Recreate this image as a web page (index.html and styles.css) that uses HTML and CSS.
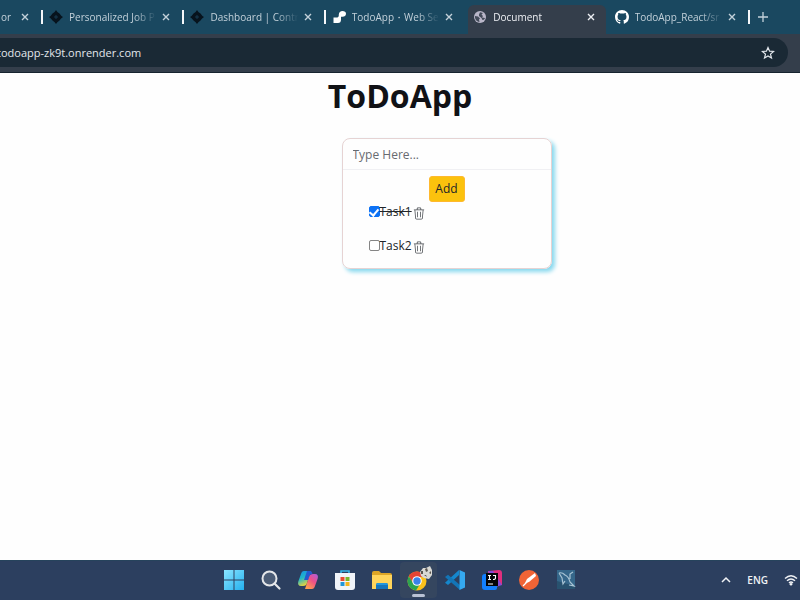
FILE: index.html
```html
<!DOCTYPE html>
<html lang="en">
<head>
<meta charset="utf-8">
<title>Document</title>
<link rel="stylesheet" href="styles.css">
</head>
<body>
<svg class="defs" aria-hidden="true">
  <symbol id="close" viewBox="0 0 8 8"><path d="M1 1l6 6M7 1L1 7" stroke="currentColor" stroke-width="1.4" fill="none"/></symbol>
  <symbol id="spark" viewBox="0 0 14 14"><path d="M7 0Q8 2 10.500 3.500Q12 6 14 7Q12 8 10.500 10.500Q8 12 7 14Q6 12 3.500 10.500Q2 8 0 7Q2 6 3.500 3.500Q6 2 7 0z" fill="#07131d"/><path d="M7 5v4M5 7h4" stroke="#1b435b" stroke-width=".8"/></symbol>
  <symbol id="trash" viewBox="0 0 16 16"><path fill="currentColor" d="M6.500 1h3a.5.5 0 0 1 .5.5v1H6v-1a.5.5 0 0 1 .5-.5M11 2.500v-1A1.500 1.500 0 0 0 9.500 0h-3A1.500 1.500 0 0 0 5 1.500v1H1.500a.5.5 0 0 0 0 1h.54l.85 10.660A2 2 0 0 0 4.885 16h6.230a2 2 0 0 0 1.994-1.840l.853-10.660h.538a.5.5 0 0 0 0-1zm1.958 1-.846 10.580a1 1 0 0 1-.997.920h-6.230a1 1 0 0 1-.997-.920L3.042 3.500zM5.500 5.500h1V13h-1zM9.500 5.500h1V13h-1z"/></symbol>
</svg>
<header class="browser">
  <nav class="tabs" aria-label="Tabs">
    <div class="tab tab-cut"><span class="tab-title">or</span><button class="close" aria-label="Close tab"><svg><use href="#close"/></svg></button></div>
    <div class="tab divided"><svg class="favicon"><use href="#spark"/></svg><span class="tab-title">Personalized Job P</span><button class="close" aria-label="Close tab"><svg><use href="#close"/></svg></button></div>
    <div class="tab divided"><svg class="favicon"><use href="#spark"/></svg><span class="tab-title">Dashboard | Contr</span><button class="close" aria-label="Close tab"><svg><use href="#close"/></svg></button></div>
    <div class="tab divided"><svg class="favicon" viewBox="0 0 14 14"><path fill="#fff" d="M10.500 1C12.500 1 14 2 14 3.800S12.500 6.800 10.500 6.800H9V9.500Q9 13 6 13H1.500V7.600H4.500C6 7.600 6.600 7 6.800 5.500V4.500C7 2.500 8.300 1 10.500 1z"/></svg><span class="tab-title">TodoApp・Web Se</span><button class="close" aria-label="Close tab"><svg><use href="#close"/></svg></button></div>
    <div class="tab active"><svg class="favicon" viewBox="0 0 14 14"><circle cx="7" cy="7" r="6" fill="#b9b6c8"/><path fill="#434b59" d="M2 6L5 6.500L7 8.500L6 9.500L6.500 12C3.500 11.500 1.600 9 2 6zM7 2.200L10 3L8.500 4.500L10 6L9 7.500L12 8C11.500 9.500 10.500 10 9.500 10L8.500 8L6 6L6 4.500z"/></svg><span class="tab-title">Document</span><button class="close" aria-label="Close tab"><svg><use href="#close"/></svg></button></div>
    <div class="tab"><svg class="favicon" viewBox="0 0 16 16"><path fill="#fff" d="M8 0C3.580 0 0 3.580 0 8c0 3.540 2.290 6.530 5.470 7.590.4.070.55-.17.55-.38v-1.490c-2.010.37-2.530-.49-2.690-.94-.09-.23-.48-.94-.82-1.130-.28-.15-.68-.52-.01-.53.63-.01 1.080.58 1.230.82.72 1.210 1.870.87 2.330.66.07-.52.28-.87.51-1.070-1.780-.2-3.640-.89-3.640-3.950 0-.87.31-1.590.82-2.150-.08-.2-.36-1.020.08-2.120 0 0 .67-.21 2.200.82a7.600 7.600 0 0 1 4 0c1.530-1.040 2.200-.82 2.200-.82.44 1.100.16 1.920.08 2.120.51.56.82 1.270.82 2.150 0 3.070-1.870 3.750-3.650 3.950.29.25.54.73.54 1.480v2.200c0 .21.15.46.55.38A8 8 0 0 0 16 8c0-4.420-3.580-8-8-8z"/></svg><span class="tab-title">TodoApp_React/sr</span><button class="close" aria-label="Close tab"><svg><use href="#close"/></svg></button></div>
    <div class="new-tab divided"><button class="close" aria-label="New tab"><svg viewBox="0 0 10 10"><path d="M5 0v10M0 5h10" stroke="currentColor" stroke-width="1.300"/></svg></button></div>
  </nav>
  <div class="toolbar">
    <div class="address">
      <span>todoapp-zk9t.onrender.com</span>
      <button class="star" aria-label="Bookmark"><svg viewBox="0 0 14 14"><path d="M7 1.500L8.600 5.200L12.600 5.500L9.500 8.100L10.500 12L7 9.900L3.500 12L4.500 8.100L1.400 5.500L5.400 5.200z" fill="none" stroke="currentColor" stroke-width="1.200"/></svg></button>
    </div>
  </div>
</header>
<main class="page">
  <h1>ToDoApp</h1>
  <form class="card">
    <input class="entry" type="text" placeholder="Type Here..." aria-label="New task">
    <button class="add" type="button">Add</button>
    <ul class="tasks">
      <li><input type="checkbox" id="t1" checked><label for="t1">Task1</label><button type="button" class="delete" aria-label="Delete Task1"><svg><use href="#trash"/></svg></button></li>
      <li><input type="checkbox" id="t2"><label for="t2">Task2</label><button type="button" class="delete" aria-label="Delete Task2"><svg><use href="#trash"/></svg></button></li>
    </ul>
  </form>
</main>
<footer class="taskbar">
  <nav class="apps" aria-label="Taskbar">
    <button aria-label="Start"><svg viewBox="0 0 22 22"><defs><linearGradient id="win" x2="1" y2="1"><stop stop-color="#8be5ff"/><stop offset="1" stop-color="#23b0ef"/></linearGradient></defs><path fill="url(#win)" d="M1 1h9.500v9.500H1zM11.500 1H21v9.500h-9.500zM1 11.500h9.500V21H1zM11.500 11.500H21V21h-9.500z"/></svg></button>
    <button aria-label="Search"><svg viewBox="0 0 22 22"><circle cx="9.500" cy="9.500" r="7" fill="#4b5c76" stroke="#e4e6e9" stroke-width="2"/><path d="M14.500 14.500l5 5" stroke="#e4e6e9" stroke-width="2.200" stroke-linecap="round"/></svg></button>
    <button aria-label="Copilot"><svg viewBox="0 0 22 22"><defs><linearGradient id="cpa" x2=".4" y2="1"><stop stop-color="#188ce8"/><stop offset=".5" stop-color="#20b7c7"/><stop offset="1" stop-color="#e8d43c"/></linearGradient><linearGradient id="cpb" x1="1" x2=".3" y2="1"><stop stop-color="#a85ee0"/><stop offset=".5" stop-color="#ee5087"/><stop offset="1" stop-color="#ff9e4e"/></linearGradient></defs><path fill="url(#cpa)" d="M7 2h7l-4 12c-.5 2-1.500 3-4 3H4c-2.500 0-3.500-2-2.700-4.500L4 5c.6-2 1.500-3 3-3z"/><path fill="url(#cpb)" d="M15 20H8l4-12c.5-2 1.500-3 4-3h2c2.500 0 3.500 2 2.700 4.500L18 17c-.6 2-1.500 3-3 3z"/><path fill="#2459cf" d="M10 2h3c1.500 0 2 1 2.500 3-2 0-3 1-3.500 3l-1 3H7z"/></svg></button>
    <button aria-label="Store"><svg viewBox="0 0 22 22"><path d="M7 5V2h8v3" fill="none" stroke="#36b6e9" stroke-width="1.600"/><path d="M1 4h20v14a3 3 0 0 1-3 3H4a3 3 0 0 1-3-3z" fill="#f1f4f8"/><path fill="#e84b30" d="M6.500 8h4v4h-4z"/><path fill="#79b72a" d="M11.500 8h4v4h-4z"/><path fill="#2096d8" d="M6.500 13h4v4h-4z"/><path fill="#f4b51e" d="M11.500 13h4v4h-4z"/></svg></button>
    <button aria-label="Files"><svg viewBox="0 0 22 22"><path fill="#dda526" d="M1 4q0-2 2-2h5l2 2h9q2 0 2 2v6H1z"/><path fill="#ffd45b" d="M1 6h20v14H1z"/><path fill="#1675bc" d="M5 20v-4q0-2 2-2h8q2 0 2 2v4z"/><path fill="#2496dc" d="M5 16q0-2 2-2h8q2 0 2 2z"/></svg></button>
    <button class="running" aria-label="Chrome"><svg viewBox="0 0 22 22"><circle cx="10" cy="12" r="9.500" fill="#fbc11b"/><path fill="#e64434" d="M1.800 7.200A9.500 9.500 0 0 1 18.500 8H10L6 14z"/><path fill="#2ca450" d="M1.800 7.200A9.500 9.500 0 0 0 9 21.500l4-6.500L6 14z"/><circle cx="10" cy="12" r="4.800" fill="#fff"/><circle cx="10" cy="12" r="3.700" fill="#3a82e9"/></svg><svg class="avatar" viewBox="0 0 14 14"><path fill="#d8d8d3" d="M1 6l3-4 3 0 4-2 2 4 0 5-3 4-5-1-3-2z"/><path fill="#59544e" d="M2 5l2 0 0 3-2 0zM6 3l2-1 1 3-2 1zM10 7l2-2 0 3zM5 9l2 0 1 2z"/></svg></button>
    <button aria-label="Code"><svg viewBox="0 0 22 22"><path fill="#1587cd" d="M15 1v5L4 16l-3-2.300L15 1z"/><path fill="#1375b7" d="M1 8l3-2.300L16 16v5L1 8z"/><path fill="#35a9f0" d="M15.500 1L21 3.500v15L15.500 21z"/></svg></button>
    <button aria-label="IntelliJ"><svg viewBox="0 0 22 22"><path fill="#e02f7e" d="M7 2l11-1q3 0 3 3v12L7 15z"/><path fill="#884bd8" d="M7 2l5 0 9 14-6 2z"/><path fill="#127fff" d="M1 8q0-3 3-3h12v14q0 2-2 2H4q-3 0-3-3z"/><path fill="#050609" d="M5 4h12v13H5z"/><path d="M7 6.500h3M8.500 6.500v4M7 10.500h3M12 6.500h2.500v2.500q0 1.500-2.500 1.500M7 15h5" stroke="#fff" stroke-width="1.100" fill="none"/></svg></button>
    <button aria-label="Postman"><svg viewBox="0 0 22 22"><circle cx="11" cy="11" r="10" fill="#f06436"/><path fill="#fff" d="M17 4l1 3-7 6-4 1 2-4z"/><path d="M5 17l5-5" stroke="#fff" stroke-width="1.300"/></svg></button>
    <button aria-label="Workbench"><svg viewBox="0 0 22 22"><path fill="#35678a" d="M2 1h18v19H2z"/><path fill="#28526f" d="M2 12l18 5v3H2z"/><path d="M4 4Q7 3 10 6q4 2 5 7l4 4-5-1M4 4l3 5 1 6 2-3M15 10V5l3-2" fill="none" stroke="#a8c4d4" stroke-width="1.200"/></svg></button>
  </nav>
  <div class="tray">
    <svg class="chevron" viewBox="0 0 10 10"><path d="M1 7l4-4 4 4" fill="none" stroke="currentColor" stroke-width="1.500"/></svg>
    <span>ENG</span>
    <svg class="wifi" viewBox="0 0 14 12"><path d="M1 4.500Q7-1 13 4.500M3 6.800Q7 3 11 6.800M5 9Q7 7 9 9" fill="none" stroke="currentColor" stroke-width="1.400"/><circle cx="7" cy="10.300" r="1.300" fill="currentColor"/></svg>
  </div>
</footer>
</body>
</html>
```
FILE: styles.css
```css
* { box-sizing: border-box; }
body {
  margin: 0;
  min-height: 100vh;
  display: flex;
  flex-direction: column;
  overflow: hidden;
  background: #fefefe;
  color: #212529;
  font: 12px/20px "Open Sans", "Noto Sans", sans-serif;
}
button { border: 0; padding: 0; background: none; color: inherit; font: inherit; }
svg { display: block; flex: none; }
.defs { position: absolute; width: 0; height: 0; }

.tabs {
  display: flex;
  height: 34px;
  background: #1a4860;
  color: #c3d1da;
  font-size: 10px;
  font-weight: 500;
}
.tab {
  position: relative;
  flex: 1 1 0;
  min-width: 0;
  display: flex;
  align-items: center;
  padding: 0 12px 0 8px;
}
.tab-cut { flex: 0 0 40px; padding-left: 0; }
.divided { position: relative; }
.divided::before {
  content: "";
  position: absolute;
  left: 0;
  top: 10px;
  width: 2px;
  height: 14px;
  background: #f5f7fa;
}
.favicon { width: 14px; height: 14px; margin-right: 6px; }
.tab-title {
  flex: 1;
  min-width: 0;
  white-space: nowrap;
  -webkit-mask-image: linear-gradient(90deg, #000 70%, transparent 94%);
  mask-image: linear-gradient(90deg, #000 70%, transparent 94%);
}
.tab.active::before {
  content: "";
  position: absolute;
  inset: 5px 1px 0 3px;
  border-radius: 6px 6px 0 0;
  background: #343e4b;
}
.active > * { position: relative; }
.active { color: #eef0f4; }
.close svg { width: 8px; height: 8px; }
.new-tab { flex: 0 0 52px; display: flex; align-items: center; padding-left: 10px; }
.new-tab svg { width: 10px; height: 10px; }
.tabs { padding-left: 1px; }

.toolbar {
  padding: 4px 12px 5px 0;
  background: #343e4b;
  border-bottom: 1px solid #17242f;
}
.address {
  display: flex;
  justify-content: space-between;
  align-items: center;
  height: 29px;
  margin-left: -3px;
  padding-right: 13px;
  border-radius: 0 15px 15px 0;
  background: #1a2935;
  color: #e2e7ec;
  font-size: 11px;
  font-weight: 500;
}
.star svg { width: 14px; height: 14px; }

.page { flex: 1; display: flex; flex-direction: column; align-items: center; }
h1 { margin: 0; font-size: 32px; line-height: 46px; font-weight: 700; color: #111216; }
.card {
  width: 210px;
  margin: 19px 0 0 93px;
  padding-bottom: 12px;
  border: 1px solid #e6d3d3;
  border-radius: 8px;
  box-shadow: 3px 3px 4px #87d8ee;
  display: flex;
  flex-direction: column;
  align-items: center;
}
.entry {
  width: 100%;
  height: 31px;
  padding: 0 10px;
  border: 0;
  border-bottom: 1px solid #f0f0f3;
  border-radius: 8px 8px 0 0;
  background: none;
  color: inherit;
  font: inherit;
}
.entry::placeholder { color: #686b70; opacity: 1; }
.add {
  width: 36px;
  height: 26px;
  margin-top: 6px;
  border: 1px solid #ffb92e;
  border-radius: 3px;
  background: #fbc20d;
  line-height: 24px;
}
.tasks {
  align-self: stretch;
  display: grid;
  gap: 14px;
  margin: 0;
  padding: 0 26px;
  list-style: none;
}
.tasks li { display: flex; align-items: center; height: 20px; }
.tasks input {
  appearance: none;
  width: 11px;
  height: 11px;
  margin: 0 0 2px;
  border: 1px solid #858585;
  border-radius: 2px;
  background: #fff;
}
.tasks input:checked { border-color: #0d72f5; background: #0d72f5; }
.tasks input:checked::before {
  content: "";
  display: block;
  width: 4px;
  height: 7px;
  margin: 0 auto;
  border: solid #fff;
  border-width: 0 2px 2px 0;
  transform: rotate(40deg);
}
.tasks input:checked + label { text-decoration: line-through; }
.delete { margin: 2px 0 0 1px; color: #45494e; }
.delete svg { width: 12px; height: 13px; }

.taskbar {
  display: grid;
  grid-template-columns: 1fr 46% 1fr;
  height: 40px;
  border-top: 1px solid #26435c;
  background: #2c3f5f;
  color: #f1f3f6;
}
.apps { grid-column: 2; display: flex; align-items: center; padding-bottom: 1px; }
.apps button { position: relative; flex: 1; height: 36px; display: grid; place-items: center; }
.apps svg { width: 22px; height: 22px; }
.apps .running { background: #35465f; border-radius: 4px; }
.running::after {
  content: "";
  position: absolute;
  left: 12px;
  bottom: 1px;
  width: 13px;
  height: 3px;
  border-radius: 2px;
  background: #b9c2d4;
}
.apps .avatar { position: absolute; width: 14px; height: 14px; top: 4px; right: 4px; }
.tray {
  display: flex;
  justify-content: flex-end;
  align-items: center;
  gap: 16px;
  padding: 0 2px 2px 0;
  font-size: 10px;
  font-weight: 600;
}
.chevron { width: 10px; height: 10px; }
.wifi { width: 14px; height: 12px; }
```
